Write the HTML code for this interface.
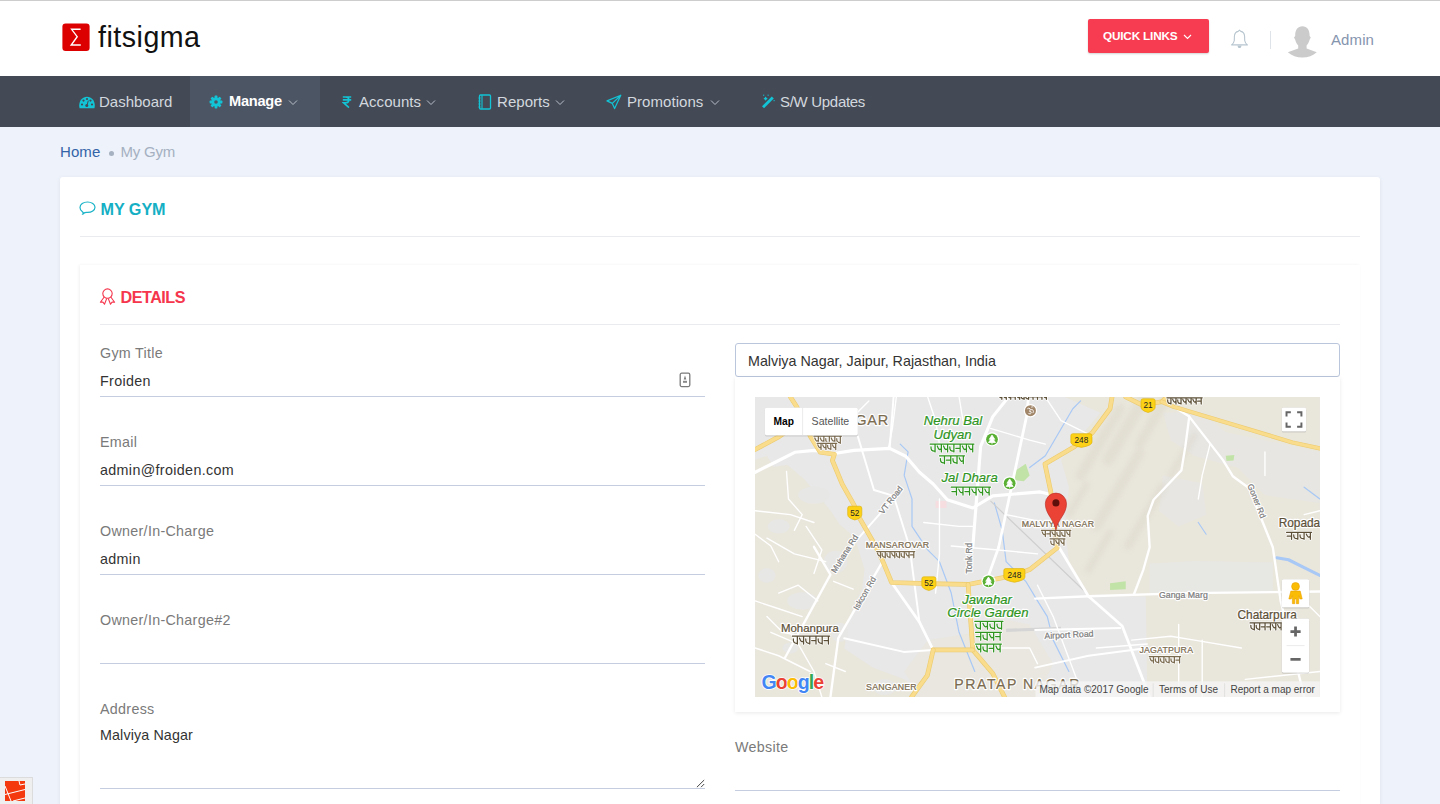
<!DOCTYPE html>
<html><head><meta charset="utf-8">
<style>
*{box-sizing:border-box;margin:0;padding:0}
html,body{width:1440px;height:804px;overflow:hidden}
body{background:#eef2fa;font-family:"Liberation Sans",sans-serif;position:relative;color:#333}
.abs{position:absolute}
svg{display:block}
#topline{left:0;top:0;width:1440px;height:1px;background:#cdcdcd}
#header{left:0;top:1px;width:1440px;height:75px;background:#fff}
#nav{left:0;top:76px;width:1440px;height:51px;background:#434a55}
#nav .active{position:absolute;left:190px;top:0;width:130px;height:51px;background:#4c5564}
.navt{position:absolute;top:0;line-height:51px;font-size:15px;color:#d3d8df;white-space:nowrap;letter-spacing:.05px}
.ico{position:absolute}
#card{left:60px;top:177px;width:1320px;height:700px;background:#fff;border-radius:3px;box-shadow:0 1px 4px rgba(0,0,0,.07)}
.hr{position:absolute;height:1px;background:#e9ebee}
#inner{left:80px;top:265px;width:1280px;height:600px;background:#fff;box-shadow:-1px 0 3px rgba(0,0,0,.06)}
.lbl{position:absolute;font-size:14.3px;line-height:18px;color:#7a7a7a;white-space:nowrap;letter-spacing:.3px}
.val{position:absolute;font-size:14.3px;line-height:18px;color:#333;white-space:nowrap;letter-spacing:.35px}
.ul{position:absolute;height:1px;background:#c5cee0}
</style></head><body>
<div class="abs" id="topline"></div>
<div class="abs" id="header"></div>
<!-- logo -->
<svg class="ico" style="left:62px;top:23px" width="28" height="28" viewBox="0 0 28 28">
  <rect x="0.4" y="0.4" width="27.2" height="27.5" rx="3.2" fill="#dd0000"/>
  <path d="M18.6 6.3H9.6L15.2 13.7L9.2 22H18.8" fill="none" stroke="#fff" stroke-width="1.4" stroke-linejoin="miter"/>
</svg>
<div class="abs" style="left:98px;top:17px;font-size:28.6px;color:#111;line-height:40px;letter-spacing:.5px">fitsigma</div>
<!-- quick links -->
<div class="abs" style="left:1088px;top:19px;width:121px;height:34px;background:#f73b51;border-radius:2px;box-shadow:0 1px 2px rgba(0,0,0,.18)"></div>
<div class="abs" style="left:1103px;top:19px;line-height:34px;font-size:11.8px;font-weight:bold;color:#fff;letter-spacing:-.2px">QUICK LINKS</div>
<svg class="ico" style="left:1183px;top:33px" width="9" height="7" viewBox="0 0 9 7"><path d="M1 2L4.5 5.5L8 2" fill="none" stroke="#fff" stroke-width="1.1"/></svg>
<!-- bell -->
<svg class="ico" style="left:1230px;top:29px" width="20" height="21" viewBox="0 0 20 21">
  <path d="M9.4 1.2L8.2 2.4C6 2.8 4.6 4.6 4.4 7.2L4.3 11.5C4.1 13 3.4 14.4 1.6 15.9H17.4C15.6 14.4 14.9 13 14.7 11.5L14.6 7.2C14.4 4.6 13 2.8 10.8 2.4Z" fill="none" stroke="#b7c5cf" stroke-width="1.1" stroke-linejoin="round"/>
  <path d="M7.4 16.4H11.6L10.9 18.6Q9.5 19.6 8.1 18.6Z" fill="#b7c5cf"/>
</svg>
<!-- divider -->
<div class="abs" style="left:1270px;top:31px;width:1px;height:18px;background:#dde3e8"></div>
<!-- avatar -->
<svg class="ico" style="left:1287px;top:26px" width="31" height="32" viewBox="0 0 31 32">
  <path d="M8.2 10C8 4 10.8 0.3 15.4 0.3C20 0.3 22.8 4 22.6 10L23.8 11.6L22.6 13.8C22 16.4 20.6 18.6 19.6 19.6V22.4L29.8 26.2C26 29.6 21 31.6 15.4 31.6C9.8 31.6 4.8 29.6 0.8 26.2L11.2 22.4V19.6C10.2 18.6 8.8 16.4 8.2 13.8L7 11.6Z" fill="#cbcbcb"/>
</svg>
<div class="abs" style="left:1331px;top:27px;font-size:15px;color:#8595ae;line-height:26px;letter-spacing:.1px">Admin</div>

<div class="abs" id="nav">
  <div class="active"></div>
  <!-- dashboard icon -->
  <svg class="ico" style="left:79px;top:20px" width="16" height="13" viewBox="0 0 16 13">
    <path d="M0.6 12.2C0.3 11.2 0.2 10.4 0.2 9.5C0.2 4.6 3.6 0.8 8 0.8C12.4 0.8 15.8 4.6 15.8 9.5C15.8 10.4 15.7 11.2 15.4 12.2Z" fill="#12c4d6"/>
    <circle cx="3" cy="8.5" r="1.1" fill="#434a55"/><circle cx="4.5" cy="4.6" r="1.1" fill="#434a55"/><circle cx="8" cy="3" r="1.1" fill="#434a55"/><circle cx="11.5" cy="4.6" r="1.1" fill="#434a55"/><circle cx="13" cy="8.5" r="1.1" fill="#434a55"/>
    <circle cx="7.8" cy="9.6" r="1.5" fill="#434a55"/><path d="M8 9.5L9.3 4.6" stroke="#434a55" stroke-width="1"/>
  </svg>
  <div class="navt" style="left:99px;top:0;letter-spacing:0">Dashboard</div>
  <!-- gear -->
  <svg class="ico" style="left:209px;top:19px" width="14" height="14" viewBox="0 0 14 14">
    <g transform="translate(7 7)" fill="#12c4d6">
      <circle r="4.6"/>
      <rect x="-1.4" y="-6.4" width="2.8" height="12.8" rx=".6"/>
      <rect x="-1.4" y="-6.4" width="2.8" height="12.8" rx=".6" transform="rotate(45)"/>
      <rect x="-1.4" y="-6.4" width="2.8" height="12.8" rx=".6" transform="rotate(90)"/>
      <rect x="-1.4" y="-6.4" width="2.8" height="12.8" rx=".6" transform="rotate(135)"/>
      <circle r="1.8" fill="#4c5564"/>
    </g>
  </svg>
  <div class="navt" style="left:229px;top:0;color:#fff;font-weight:bold;font-size:14.6px;letter-spacing:-.25px">Manage</div>
  <svg class="ico" style="left:288px;top:23px" width="10" height="7" viewBox="0 0 10 7"><path d="M1 1.5L5 5.5L9 1.5" fill="none" stroke="#b8bfc9" stroke-width="1"/></svg>
  <!-- rupee -->
  <svg class="ico" style="left:342px;top:20px" width="10" height="12" viewBox="0 0 10 12">
    <path d="M0.8 1H9.2 M0.8 3.9H9.2 M1.2 1H3.8C5.8 1 6.8 2.2 6.8 3.9C6.8 5.6 5.6 6.7 3.6 6.7H1.4L7 11.6" fill="none" stroke="#12c4d6" stroke-width="1.6"/>
  </svg>
  <div class="navt" style="left:359px;top:0">Accounts</div>
  <svg class="ico" style="left:426px;top:23px" width="10" height="7" viewBox="0 0 10 7"><path d="M1 1.5L5 5.5L9 1.5" fill="none" stroke="#b8bfc9" stroke-width="1"/></svg>
  <!-- notebook -->
  <svg class="ico" style="left:478px;top:18px" width="14" height="16" viewBox="0 0 14 16">
    <rect x="1.5" y="1" width="11" height="14" rx="1" fill="none" stroke="#12c4d6" stroke-width="1.3"/>
    <path d="M4 1.2V14.8" stroke="#12c4d6" stroke-width="1.1"/>
    <path d="M0.5 4H2.5 M0.5 7H2.5 M0.5 10H2.5 M0.5 13H2.5" stroke="#12c4d6" stroke-width="1"/>
  </svg>
  <div class="navt" style="left:497px;top:0">Reports</div>
  <svg class="ico" style="left:555px;top:23px" width="10" height="7" viewBox="0 0 10 7"><path d="M1 1.5L5 5.5L9 1.5" fill="none" stroke="#b8bfc9" stroke-width="1"/></svg>
  <!-- plane -->
  <svg class="ico" style="left:605px;top:18px" width="17" height="16" viewBox="0 0 17 16">
    <path d="M15.8 1.2L2 6.9L7.3 9.4L9.6 14.6Z M15.8 1.2L7.3 9.4" fill="none" stroke="#12c4d6" stroke-width="1.2" stroke-linejoin="round"/>
  </svg>
  <div class="navt" style="left:627px;top:0">Promotions</div>
  <svg class="ico" style="left:710px;top:23px" width="10" height="7" viewBox="0 0 10 7"><path d="M1 1.5L5 5.5L9 1.5" fill="none" stroke="#b8bfc9" stroke-width="1"/></svg>
  <!-- wand -->
  <svg class="ico" style="left:761px;top:18px" width="15" height="15" viewBox="0 0 15 15">
    <path d="M2 13.2L11.8 3.4" stroke="#12c4d6" stroke-width="2.8" stroke-linecap="butt"/>
    <path d="M4.6 2.6l.9 1.2 1.2.9-1.2.9-.9 1.2-.9-1.2-1.2-.9 1.2-.9z" fill="#12c4d6"/>
    <rect x="2.2" y="0.6" width="1" height="1.2" fill="#12c4d6"/><rect x="6.6" y="0.6" width="1" height="1.2" fill="#12c4d6"/><rect x="12.6" y="6" width="1" height="1.2" fill="#12c4d6"/>
  </svg>
  <div class="navt" style="left:780px;top:0;letter-spacing:-.3px">S/W Updates</div>
</div>
<div class="abs" style="left:60px;top:142px;font-size:15px;color:#3364a8;line-height:20px;letter-spacing:.1px">Home</div>
<div class="abs" style="left:108.7px;top:151px;width:5px;height:5px;border-radius:50%;background:#a6b1c1"></div>
<div class="abs" style="left:120.5px;top:142px;font-size:15px;color:#a4b0c1;line-height:20px;letter-spacing:-.2px">My Gym</div>

<div class="abs" id="card"></div>
<svg class="ico" style="left:79px;top:200px" width="18" height="16" viewBox="0 0 18 16">
  <path d="M4.6 13.6C4.4 12.6 4.1 12.4 3.2 11.6C1.9 10.6 1 9.2 1 7.6C1 4.4 4.4 2 8.5 2C12.6 2 16 4.4 16 7.3C16 10.2 12.6 12.4 8.6 12.4C7.6 12.4 6.8 12.3 5.9 12.6C5 13 4.4 13.8 3.4 14.2Z" fill="none" stroke="#1ab3c7" stroke-width="1.2" stroke-linejoin="round"/>
</svg>
<div class="abs" style="left:100.5px;top:199px;font-size:16.2px;font-weight:bold;color:#14afc4;line-height:20px;letter-spacing:-.05px">MY GYM</div>
<div class="hr" style="left:80px;top:236px;width:1280px"></div>
<div class="abs" id="inner"></div>
<svg class="ico" style="left:99px;top:287px" width="17" height="18" viewBox="0 0 17 18">
  <circle cx="8.5" cy="6.6" r="4.7" fill="none" stroke="#f5364d" stroke-width="1.1"/>
  <path d="M5.2 10L1.4 15.2L3.9 15.1L5.5 17.2L7.8 11.4 M11.8 10L15.6 15.2L13.1 15.1L11.5 17.2L9.2 11.4" fill="none" stroke="#f5364d" stroke-width="1.1" stroke-linejoin="round"/>
</svg>
<div class="abs" style="left:120.5px;top:287px;font-size:16.2px;font-weight:bold;color:#f5364d;line-height:20px;letter-spacing:-.5px">DETAILS</div>
<div class="hr" style="left:100px;top:324px;width:1240px"></div>

<div class="lbl" style="left:100px;top:344px">Gym Title</div>
<div class="val" style="left:100px;top:372px">Froiden</div>
<svg class="ico" style="left:679px;top:372px" width="12" height="16" viewBox="0 0 12 16">
  <rect x="1.2" y="1.2" width="9.6" height="13.4" rx="1.5" fill="none" stroke="#7a7a7a" stroke-width="1.3"/>
  <path d="M6 3.4L4.7 7.6H7.3Z" fill="#7a7a7a"/><rect x="4" y="8.8" width="4" height="2" fill="#888"/>
</svg>
<div class="ul" style="left:100px;top:396px;width:605px"></div>

<div class="lbl" style="left:100px;top:433px">Email</div>
<div class="val" style="left:100px;top:461px">admin@froiden.com</div>
<div class="ul" style="left:100px;top:485px;width:605px"></div>

<div class="lbl" style="left:100px;top:522px">Owner/In-Charge</div>
<div class="val" style="left:100px;top:550px">admin</div>
<div class="ul" style="left:100px;top:574px;width:605px"></div>

<div class="lbl" style="left:100px;top:611px">Owner/In-Charge#2</div>
<div class="ul" style="left:100px;top:663px;width:605px"></div>

<div class="lbl" style="left:100px;top:700px">Address</div>
<div class="val" style="left:100px;top:726px;letter-spacing:.12px">Malviya Nagar</div>
<svg class="ico" style="left:696px;top:779px" width="9" height="9" viewBox="0 0 9 9"><path d="M7.9 1.3L1.2 7.9 M7.9 5.3L5.3 7.9" stroke="#444" stroke-width="1" stroke-linecap="round"/></svg>
<div class="ul" style="left:100px;top:788px;width:605px"></div>

<div class="abs" style="left:735px;top:343px;width:605px;height:34px;border:1px solid #bac6dc;border-radius:3px;background:#fff"></div>
<div class="val" style="left:748px;top:352px;letter-spacing:0">Malviya Nagar, Jaipur, Rajasthan, India</div>
<div class="abs" style="left:735px;top:377px;width:605px;height:335px;background:#fff;box-shadow:0 1px 4px rgba(0,0,0,.09)"></div>
<div class="abs" id="map" style="left:755px;top:397px;width:565px;height:300px;background:#e8e8e8;overflow:hidden"><svg width="565" height="300" viewBox="0 0 1440 765" font-family="Liberation Sans, sans-serif" style="display:block">
<rect width="1440" height="765" fill="#e8e8e8"/>
<polygon points="0,192 38,180 82,173 127,211 190,287 216,325 254,357 279,439 273,490 254,528 235,579 228,642 300,690 380,720 440,765 0,765" fill="#e9e6dc"/>
<ellipse cx="150" cy="250" rx="40" ry="22" fill="#e7e7e5"/>
<ellipse cx="60" cy="330" rx="28" ry="18" fill="#e7e7e5"/>
<ellipse cx="205" cy="420" rx="30" ry="28" fill="#e7e7e5"/>
<ellipse cx="120" cy="520" rx="38" ry="22" fill="#e7e7e5"/>
<ellipse cx="215" cy="600" rx="22" ry="25" fill="#e7e7e5"/>
<ellipse cx="30" cy="455" rx="22" ry="18" fill="#e7e7e5"/>
<ellipse cx="330" cy="740" rx="30" ry="20" fill="#e7e7e5"/>
<ellipse cx="90" cy="640" rx="20" ry="14" fill="#e7e7e5"/>
<polygon points="0,160 30,150 60,200 0,230" fill="#e9e6dc"/>
<polygon points="790,0 1440,0 1440,765 1000,765 996,508 850,508 800,420 790,330 800,230 780,160 830,100 880,40" fill="#e9e6dc"/>
<polygon points="440,620 560,600 600,560 700,580 760,680 720,765 420,765 380,700" fill="#e9e7e0"/>
<polygon points="1040,40 1140,40 1200,90 1440,140 1440,270 1300,250 1230,180 1120,150 1060,110" fill="#e7e6e2"/>
<polygon points="1006,425 1120,418 1320,422 1320,496 1006,500" fill="#e7e7e4"/>
<polygon points="1040,200 1140,220 1150,300 1080,330 1030,290" fill="#e7e6e2"/>
<defs><filter id="bl" x="-20%" y="-20%" width="140%" height="140%"><feGaussianBlur stdDeviation="7"/></filter></defs>
<g filter="url(#bl)" opacity=".45">
<path d="M830 200 l100 -170" stroke="#dad6c8" stroke-width="26" stroke-linecap="round"/>
<path d="M900 160 l120 -204" stroke="#dad6c8" stroke-width="30" stroke-linecap="round"/>
<path d="M980 120 l100 -170" stroke="#dad6c8" stroke-width="24" stroke-linecap="round"/>
<path d="M870 330 l110 -187" stroke="#dad6c8" stroke-width="26" stroke-linecap="round"/>
<path d="M1010 60 l80 -136" stroke="#dad6c8" stroke-width="20" stroke-linecap="round"/>
<path d="M950 380 l90 -153" stroke="#dad6c8" stroke-width="22" stroke-linecap="round"/>
<path d="M850 440 l55 -93.5" stroke="#dad6c8" stroke-width="20" stroke-linecap="round"/>
<path d="M1060 200 l60 -102" stroke="#dad6c8" stroke-width="18" stroke-linecap="round"/>
<path d="M800 300 l45 -76.5" stroke="#dad6c8" stroke-width="18" stroke-linecap="round"/>
</g>
<polygon points="660,190 690,170 700,200 685,215 662,212" fill="#c2e3a8"/>
<polygon points="905,475 945,470 945,490 905,492" fill="#c2e3a8"/>
<polygon points="1200,150 1222,148 1220,162 1202,163" fill="#c2e3a8"/>
<rect x="460" y="265" width="28" height="18" fill="#f5dde0"/>
<polyline points="1330,410 1360,415 1400,435 1440,455" fill="none" stroke="#a8c8f5" stroke-width="8" stroke-linejoin="round" stroke-linecap="round"/>
<polyline points="610,270 630,340 640,420 690,470 720,520 745,560 760,620 800,700" fill="none" stroke="#a8c8f5" stroke-width="3" stroke-linejoin="round" stroke-linecap="round"/>
<polyline points="370,120 390,140 380,200 400,260 400,330 440,390 470,420 500,500 520,600 560,700" fill="none" stroke="#a8c8f5" stroke-width="3" stroke-linejoin="round" stroke-linecap="round"/>
<polyline points="700,180 740,150 810,30 830,10" fill="none" stroke="#a8c8f5" stroke-width="3" stroke-linejoin="round" stroke-linecap="round"/>
<polyline points="1130,320 1150,350" fill="none" stroke="#a8c8f5" stroke-width="3" stroke-linejoin="round" stroke-linecap="round"/>
<polyline points="1400,230 1440,260" fill="none" stroke="#a8c8f5" stroke-width="3" stroke-linejoin="round" stroke-linecap="round"/>
<polyline points="600,265 720,380 850,505" fill="none" stroke="#cfcfcf" stroke-width="3"/>
<polyline points="640,595 780,590" fill="none" stroke="#d5d5d5" stroke-width="8"/>
<polyline points="80,190 85,260 120,300 100,340" fill="none" stroke="#ffffff" stroke-width="3.5" stroke-linejoin="round" stroke-linecap="round"/>
<polyline points="0,350 40,380 60,420" fill="none" stroke="#ffffff" stroke-width="3.5" stroke-linejoin="round" stroke-linecap="round"/>
<polyline points="130,330 170,390 150,450" fill="none" stroke="#ffffff" stroke-width="3.5" stroke-linejoin="round" stroke-linecap="round"/>
<polyline points="60,500 110,480 160,520" fill="none" stroke="#ffffff" stroke-width="3.5" stroke-linejoin="round" stroke-linecap="round"/>
<polyline points="30,560 70,600 120,610" fill="none" stroke="#ffffff" stroke-width="3.5" stroke-linejoin="round" stroke-linecap="round"/>
<polyline points="200,470 250,490" fill="none" stroke="#ffffff" stroke-width="3.5" stroke-linejoin="round" stroke-linecap="round"/>
<polyline points="180,680 230,700" fill="none" stroke="#ffffff" stroke-width="3.5" stroke-linejoin="round" stroke-linecap="round"/>
<polyline points="0,290 90,300 150,320" fill="none" stroke="#ffffff" stroke-width="3.5" stroke-linejoin="round" stroke-linecap="round"/>
<polyline points="30,360 100,400 180,420" fill="none" stroke="#ffffff" stroke-width="3.5" stroke-linejoin="round" stroke-linecap="round"/>
<polyline points="0,520 60,540 120,560" fill="none" stroke="#ffffff" stroke-width="3.5" stroke-linejoin="round" stroke-linecap="round"/>
<polyline points="40,600 110,630 150,700 170,765" fill="none" stroke="#ffffff" stroke-width="3.5" stroke-linejoin="round" stroke-linecap="round"/>
<polyline points="260,40 290,10" fill="none" stroke="#ffffff" stroke-width="3.5" stroke-linejoin="round" stroke-linecap="round"/>
<polyline points="360,0 350,80 340,130" fill="none" stroke="#ffffff" stroke-width="3.5" stroke-linejoin="round" stroke-linecap="round"/>
<polyline points="440,0 460,60 470,120" fill="none" stroke="#ffffff" stroke-width="3.5" stroke-linejoin="round" stroke-linecap="round"/>
<polyline points="520,0 530,60" fill="none" stroke="#ffffff" stroke-width="3.5" stroke-linejoin="round" stroke-linecap="round"/>
<polyline points="740,0 780,60 860,100" fill="none" stroke="#ffffff" stroke-width="3.5" stroke-linejoin="round" stroke-linecap="round"/>
<polyline points="600,80 700,110 740,120" fill="none" stroke="#ffffff" stroke-width="3.5" stroke-linejoin="round" stroke-linecap="round"/>
<polyline points="430,320 520,330 560,330" fill="none" stroke="#ffffff" stroke-width="3.5" stroke-linejoin="round" stroke-linecap="round"/>
<polyline points="470,260 470,400 460,500" fill="none" stroke="#ffffff" stroke-width="3.5" stroke-linejoin="round" stroke-linecap="round"/>
<polyline points="500,380 620,390 720,400" fill="none" stroke="#ffffff" stroke-width="3.5" stroke-linejoin="round" stroke-linecap="round"/>
<polyline points="640,300 740,320" fill="none" stroke="#ffffff" stroke-width="3.5" stroke-linejoin="round" stroke-linecap="round"/>
<polyline points="720,480 760,560 790,640 820,720" fill="none" stroke="#ffffff" stroke-width="3.5" stroke-linejoin="round" stroke-linecap="round"/>
<polyline points="620,640 700,640 720,680" fill="none" stroke="#ffffff" stroke-width="3.5" stroke-linejoin="round" stroke-linecap="round"/>
<polyline points="1160,120 1140,200 1130,260" fill="none" stroke="#ffffff" stroke-width="3.5" stroke-linejoin="round" stroke-linecap="round"/>
<polyline points="1300,140 1300,200" fill="none" stroke="#ffffff" stroke-width="3.5" stroke-linejoin="round" stroke-linecap="round"/>
<polyline points="1400,300 1440,290" fill="none" stroke="#ffffff" stroke-width="3.5" stroke-linejoin="round" stroke-linecap="round"/>
<polyline points="960,620 1060,610 1120,620 1240,640" fill="none" stroke="#ffffff" stroke-width="3.5" stroke-linejoin="round" stroke-linecap="round"/>
<polyline points="1080,580 1080,765" fill="none" stroke="#ffffff" stroke-width="3.5" stroke-linejoin="round" stroke-linecap="round"/>
<polyline points="1140,620 1140,765" fill="none" stroke="#ffffff" stroke-width="3.5" stroke-linejoin="round" stroke-linecap="round"/>
<polyline points="870,640 1000,630" fill="none" stroke="#ffffff" stroke-width="3.5" stroke-linejoin="round" stroke-linecap="round"/>
<polyline points="1250,720 1440,700" fill="none" stroke="#ffffff" stroke-width="3.5" stroke-linejoin="round" stroke-linecap="round"/>
<polyline points="1400,520 1440,560" fill="none" stroke="#ffffff" stroke-width="3.5" stroke-linejoin="round" stroke-linecap="round"/>
<polyline points="0,192 50,167 101,141 151,136 202,144 252,136 343,131 384,151 419,192 454,222 490,262 555,283 606,252 727,242 760,250" fill="none" stroke="#ffffff" stroke-width="8" stroke-linejoin="round" stroke-linecap="round"/>
<polyline points="555,383 575,126 606,50 646,0" fill="none" stroke="#ffffff" stroke-width="8" stroke-linejoin="round" stroke-linecap="round"/>
<polyline points="621,383 692,50 697,0" fill="none" stroke="#ffffff" stroke-width="7" stroke-linejoin="round" stroke-linecap="round"/>
<polyline points="596,453 621,383" fill="none" stroke="#ffffff" stroke-width="7" stroke-linejoin="round" stroke-linecap="round"/>
<polyline points="774,382 850,508 936,584 1006,765" fill="none" stroke="#ffffff" stroke-width="7" stroke-linejoin="round" stroke-linecap="round"/>
<polyline points="1107,50 1097,126 1087,187 1016,262 1001,303 1006,383 990,440 966,503" fill="none" stroke="#ffffff" stroke-width="6" stroke-linejoin="round" stroke-linecap="round"/>
<polyline points="1067,25 1107,50 1193,161 1218,202 1259,232 1320,383 1340,520 1370,640 1400,765" fill="none" stroke="#ffffff" stroke-width="6" stroke-linejoin="round" stroke-linecap="round"/>
<polyline points="714,514 850,508 1100,500 1440,496" fill="none" stroke="#ffffff" stroke-width="6" stroke-linejoin="round" stroke-linecap="round"/>
<polyline points="714,594 931,589" fill="none" stroke="#ffffff" stroke-width="5" stroke-linejoin="round" stroke-linecap="round"/>
<polyline points="150,382 192,453 126,574 76,665" fill="none" stroke="#ffffff" stroke-width="6" stroke-linejoin="round" stroke-linecap="round"/>
<polyline points="323,423 212,615 192,765" fill="none" stroke="#ffffff" stroke-width="6" stroke-linejoin="round" stroke-linecap="round"/>
<polyline points="227,615 379,650 454,645" fill="none" stroke="#ffffff" stroke-width="5" stroke-linejoin="round" stroke-linecap="round"/>
<polyline points="348,473 419,574 454,645" fill="none" stroke="#ffffff" stroke-width="7" stroke-linejoin="round" stroke-linecap="round"/>
<polyline points="262,101 303,237 353,252 394,383 419,574" fill="none" stroke="#ffffff" stroke-width="5" stroke-linejoin="round" stroke-linecap="round"/>
<polyline points="242,384 363,247" fill="none" stroke="#ffffff" stroke-width="5" stroke-linejoin="round" stroke-linecap="round"/>
<polyline points="353,0 343,131" fill="none" stroke="#ffffff" stroke-width="5" stroke-linejoin="round" stroke-linecap="round"/>
<polyline points="0,640 60,660 140,700" fill="none" stroke="#ffffff" stroke-width="4" stroke-linejoin="round" stroke-linecap="round"/>
<polyline points="714,690 850,660 1000,640" fill="none" stroke="#ffffff" stroke-width="5" stroke-linejoin="round" stroke-linecap="round"/>
<polyline points="90,0 106,25 141,101 166,141 202,146 197,162 222,222 252,275 263,303 303,373 323,413 348,473 443,476 543,478 661,455 700,440 770,385 760,300 754,242 739,171 815,126 860,91 905,30 910,0" fill="none" stroke="#eccb6e" stroke-width="12" stroke-linejoin="round" stroke-linecap="round"/>
<polyline points="90,0 106,25 141,101 166,141 202,146 197,162 222,222 252,275 263,303 303,373 323,413 348,473 443,476 543,478 661,455 700,440 770,385 760,300 754,242 739,171 815,126 860,91 905,30 910,0" fill="none" stroke="#f9dc8c" stroke-width="9" stroke-linejoin="round" stroke-linecap="round"/>
<polyline points="0,134 61,101 120,60" fill="none" stroke="#eccb6e" stroke-width="12" stroke-linejoin="round" stroke-linecap="round"/>
<polyline points="0,134 61,101 120,60" fill="none" stroke="#f9dc8c" stroke-width="9" stroke-linejoin="round" stroke-linecap="round"/>
<polyline points="543,478 555,645 606,705 636,765" fill="none" stroke="#eccb6e" stroke-width="12" stroke-linejoin="round" stroke-linecap="round"/>
<polyline points="543,478 555,645 606,705 636,765" fill="none" stroke="#f9dc8c" stroke-width="9" stroke-linejoin="round" stroke-linecap="round"/>
<polyline points="454,645 555,645" fill="none" stroke="#eccb6e" stroke-width="12" stroke-linejoin="round" stroke-linecap="round"/>
<polyline points="454,645 555,645" fill="none" stroke="#f9dc8c" stroke-width="9" stroke-linejoin="round" stroke-linecap="round"/>
<polyline points="454,645 439,710 399,765" fill="none" stroke="#eccb6e" stroke-width="12" stroke-linejoin="round" stroke-linecap="round"/>
<polyline points="454,645 439,710 399,765" fill="none" stroke="#f9dc8c" stroke-width="9" stroke-linejoin="round" stroke-linecap="round"/>
<polyline points="945,0 986,20 1037,12 1050,0" fill="none" stroke="#eccb6e" stroke-width="12" stroke-linejoin="round" stroke-linecap="round"/>
<polyline points="945,0 986,20 1037,12 1050,0" fill="none" stroke="#f9dc8c" stroke-width="9" stroke-linejoin="round" stroke-linecap="round"/>
<polyline points="1037,12 1067,25 1218,70 1370,116 1440,131" fill="none" stroke="#eccb6e" stroke-width="11" stroke-linejoin="round" stroke-linecap="round"/>
<polyline points="1037,12 1067,25 1218,70 1370,116 1440,131" fill="none" stroke="#f9dc8c" stroke-width="8" stroke-linejoin="round" stroke-linecap="round"/>
<path d="M989 4.5 H1015 Q1020 4.5 1020 9.5 V26.2 Q1020 34.6 1002 39.5 Q984 34.6 984 26.2 V9.5 Q984 4.5 989 4.5Z" fill="#fcd116" stroke="#dcb10c" stroke-width="1.6"/>
<text x="1002" y="29" font-size="21" fill="#222" font-weight="normal" font-style="normal" text-anchor="middle" letter-spacing="0">21</text>
<path d="M810 93.5 H854 Q859 93.5 859 98.5 V115.2 Q859 123.6 832 128.5 Q805 123.6 805 115.2 V98.5 Q805 93.5 810 93.5Z" fill="#fcd116" stroke="#dcb10c" stroke-width="1.6"/>
<text x="832" y="118" font-size="21" fill="#222" font-weight="normal" font-style="normal" text-anchor="middle" letter-spacing="0">248</text>
<path d="M241 278.5 H267 Q272 278.5 272 283.5 V300.2 Q272 308.6 254 313.5 Q236 308.6 236 300.2 V283.5 Q236 278.5 241 278.5Z" fill="#fcd116" stroke="#dcb10c" stroke-width="1.6"/>
<text x="254" y="303" font-size="21" fill="#222" font-weight="normal" font-style="normal" text-anchor="middle" letter-spacing="0">52</text>
<path d="M430 458.5 H456 Q461 458.5 461 463.5 V480.2 Q461 488.6 443 493.5 Q425 488.6 425 480.2 V463.5 Q425 458.5 430 458.5Z" fill="#fcd116" stroke="#dcb10c" stroke-width="1.6"/>
<text x="443" y="483" font-size="21" fill="#222" font-weight="normal" font-style="normal" text-anchor="middle" letter-spacing="0">52</text>
<path d="M639 437.5 H683 Q688 437.5 688 442.5 V459.2 Q688 467.6 661 472.5 Q634 467.6 634 459.2 V442.5 Q634 437.5 639 437.5Z" fill="#fcd116" stroke="#dcb10c" stroke-width="1.6"/>
<text x="661" y="462" font-size="21" fill="#222" font-weight="normal" font-style="normal" text-anchor="middle" letter-spacing="0">248</text>
<circle cx="604" cy="108" r="18" fill="#fff"/>
<circle cx="604" cy="108" r="15" fill="#5ab034"/>
<path d="M604 97 l-7 11h4l-6 8h18l-6-8h4z M604 116 v5" fill="#fff" stroke="#fff" stroke-width="2"/>
<circle cx="649" cy="220" r="18" fill="#fff"/>
<circle cx="649" cy="220" r="15" fill="#5ab034"/>
<path d="M649 209 l-7 11h4l-6 8h18l-6-8h4z M649 228 v5" fill="#fff" stroke="#fff" stroke-width="2"/>
<circle cx="595" cy="470" r="18" fill="#fff"/>
<circle cx="595" cy="470" r="15" fill="#5ab034"/>
<path d="M595 459 l-7 11h4l-6 8h18l-6-8h4z M595 478 v5" fill="#fff" stroke="#fff" stroke-width="2"/>
<circle cx="702" cy="35" r="17" fill="#fff"/><circle cx="702" cy="35" r="14" fill="#a1866a"/><path d="M694 30q4-3 7 0q3 4-2 6q6 0 5 5q-2 4-7 1 M703 33q3-3 6 1q2 4-1 7 M704 26q3-2 5 0" fill="none" stroke="#fff" stroke-width="2.2"/>
<text x="255" y="72" font-size="36.96" fill="#fff" stroke="#fff" stroke-width="6" stroke-linejoin="round" font-weight="normal" font-style="normal" text-anchor="start" letter-spacing="2">GAR</text>
<text x="255" y="72" font-size="36.96" fill="#7b6b4f" stroke="#7b6b4f" stroke-width="0.6" font-weight="normal" font-style="normal" text-anchor="start" letter-spacing="2">GAR</text>
<path d="M150 100H220 M161.2 100V118 M152.1 104.5q4.2 12.6 9.1 5.4 M175.2 100V118 M166.1 104.5q4.2 12.6 9.1 5.4 M189.2 100V118 M180.1 106.3q-0.7 10.8 8.4 9.9 M203.2 100V118 M194.1 104.5q4.2 12.6 9.1 5.4 M217.2 100V118 M208.1 106.3q-0.7 10.8 8.4 9.9" fill="none" stroke="#fff" stroke-width="7.2" stroke-linecap="round" opacity=".9"/>
<path d="M150 100H220 M161.2 100V118 M152.1 104.5q4.2 12.6 9.1 5.4 M175.2 100V118 M166.1 104.5q4.2 12.6 9.1 5.4 M189.2 100V118 M180.1 106.3q-0.7 10.8 8.4 9.9 M203.2 100V118 M194.1 104.5q4.2 12.6 9.1 5.4 M217.2 100V118 M208.1 106.3q-0.7 10.8 8.4 9.9" fill="none" stroke="#7b6b4f" stroke-width="3.2" stroke-linecap="round"/>
<path d="M158 118H208 M168 118V134 M159.875 122q3.75 11.2 8.125 4.8 M180.5 118V134 M172.375 122q3.75 11.2 8.125 4.8 M193 118V134 M184.875 123.6q-0.625 9.6 7.5 8.8 M205.5 118V134 M197.375 122q3.75 11.2 8.125 4.8" fill="none" stroke="#fff" stroke-width="7.2" stroke-linecap="round" opacity=".9"/>
<path d="M158 118H208 M168 118V134 M159.875 122q3.75 11.2 8.125 4.8 M180.5 118V134 M172.375 122q3.75 11.2 8.125 4.8 M193 118V134 M184.875 123.6q-0.625 9.6 7.5 8.8 M205.5 118V134 M197.375 122q3.75 11.2 8.125 4.8" fill="none" stroke="#7b6b4f" stroke-width="3.2" stroke-linecap="round"/>
<text x="430" y="72" font-size="33.6" fill="#fff" stroke="#fff" stroke-width="6" stroke-linejoin="round" font-weight="normal" font-style="italic" text-anchor="start" letter-spacing="0">Nehru Bal</text>
<text x="430" y="72" font-size="33.6" fill="#2f951f" stroke="#2f951f" stroke-width="0.6" font-weight="normal" font-style="italic" text-anchor="start" letter-spacing="0">Nehru Bal</text>
<text x="455" y="107" font-size="33.6" fill="#fff" stroke="#fff" stroke-width="6" stroke-linejoin="round" font-weight="normal" font-style="italic" text-anchor="start" letter-spacing="0">Udyan</text>
<text x="455" y="107" font-size="33.6" fill="#2f951f" stroke="#2f951f" stroke-width="0.6" font-weight="normal" font-style="italic" text-anchor="start" letter-spacing="0">Udyan</text>
<path d="M446 120H558 M458.8 120V140 M448.4 127q-0.8 12 9.6 11 M474.8 120V140 M464.4 125q4.8 14 10.4 6 M490.8 120V140 M480.4 125q4.8 14 10.4 6 M506.8 120V140 M496.4 127q-0.8 12 9.6 11 M522.8 120V140 M511.6 131h11.2 M538.8 120V140 M528.4 125q4.8 14 10.4 6 M554.8 120V140 M544.4 125q4.8 14 10.4 6" fill="none" stroke="#fff" stroke-width="7.2" stroke-linecap="round" opacity=".9"/>
<path d="M446 120H558 M458.8 120V140 M448.4 127q-0.8 12 9.6 11 M474.8 120V140 M464.4 125q4.8 14 10.4 6 M490.8 120V140 M480.4 125q4.8 14 10.4 6 M506.8 120V140 M496.4 127q-0.8 12 9.6 11 M522.8 120V140 M511.6 131h11.2 M538.8 120V140 M528.4 125q4.8 14 10.4 6 M554.8 120V140 M544.4 125q4.8 14 10.4 6" fill="none" stroke="#2f951f" stroke-width="3.2" stroke-linecap="round"/>
<path d="M470 150H534 M482.8 150V170 M472.4 157q-0.8 12 9.6 11 M498.8 150V170 M487.6 161h11.2 M514.8 150V170 M504.4 157q-0.8 12 9.6 11 M530.8 150V170 M520.4 155q4.8 14 10.4 6" fill="none" stroke="#fff" stroke-width="7.2" stroke-linecap="round" opacity=".9"/>
<path d="M470 150H534 M482.8 150V170 M472.4 157q-0.8 12 9.6 11 M498.8 150V170 M487.6 161h11.2 M514.8 150V170 M504.4 157q-0.8 12 9.6 11 M530.8 150V170 M520.4 155q4.8 14 10.4 6" fill="none" stroke="#2f951f" stroke-width="3.2" stroke-linecap="round"/>
<text x="475" y="217" font-size="33.6" fill="#fff" stroke="#fff" stroke-width="6" stroke-linejoin="round" font-weight="normal" font-style="italic" text-anchor="start" letter-spacing="0">Jal Dhara</text>
<text x="475" y="217" font-size="33.6" fill="#2f951f" stroke="#2f951f" stroke-width="0.6" font-weight="normal" font-style="italic" text-anchor="start" letter-spacing="0">Jal Dhara</text>
<path d="M500 230H600 M513.333 230V250 M501.667 241h11.6667 M530 230V250 M519.167 235q5 14 10.8333 6 M546.667 230V250 M535 241h11.6667 M563.333 230V250 M552.5 235q5 14 10.8333 6 M580 230V250 M569.167 235q5 14 10.8333 6 M596.667 230V250 M585.833 235q5 14 10.8333 6" fill="none" stroke="#fff" stroke-width="7.2" stroke-linecap="round" opacity=".9"/>
<path d="M500 230H600 M513.333 230V250 M501.667 241h11.6667 M530 230V250 M519.167 235q5 14 10.8333 6 M546.667 230V250 M535 241h11.6667 M563.333 230V250 M552.5 235q5 14 10.8333 6 M580 230V250 M569.167 235q5 14 10.8333 6 M596.667 230V250 M585.833 235q5 14 10.8333 6" fill="none" stroke="#2f951f" stroke-width="3.2" stroke-linecap="round"/>
<text x="680" y="331" font-size="22.4" fill="#fff" stroke="#fff" stroke-width="6" stroke-linejoin="round" font-weight="normal" font-style="normal" text-anchor="start" letter-spacing="0.5">MALVIYA NAGAR</text>
<text x="680" y="331" font-size="22.4" fill="#7b6b4f" stroke="#7b6b4f" stroke-width="0.6" font-weight="normal" font-style="normal" text-anchor="start" letter-spacing="0.5">MALVIYA NAGAR</text>
<path d="M730 340H805 M740 340V356 M731.875 344q3.75 11.2 8.125 4.8 M752.5 340V356 M743.75 348.8h8.75 M765 340V356 M756.875 344q3.75 11.2 8.125 4.8 M777.5 340V356 M769.375 345.6q-0.625 9.6 7.5 8.8 M790 340V356 M781.875 345.6q-0.625 9.6 7.5 8.8 M802.5 340V356 M794.375 344q3.75 11.2 8.125 4.8" fill="none" stroke="#fff" stroke-width="7.2" stroke-linecap="round" opacity=".9"/>
<path d="M730 340H805 M740 340V356 M731.875 344q3.75 11.2 8.125 4.8 M752.5 340V356 M743.75 348.8h8.75 M765 340V356 M756.875 344q3.75 11.2 8.125 4.8 M777.5 340V356 M769.375 345.6q-0.625 9.6 7.5 8.8 M790 340V356 M781.875 345.6q-0.625 9.6 7.5 8.8 M802.5 340V356 M794.375 344q3.75 11.2 8.125 4.8" fill="none" stroke="#7b6b4f" stroke-width="3.2" stroke-linecap="round"/>
<path d="M752 362H790 M762.133 362V378 M753.9 367.6q-0.633333 9.6 7.6 8.8 M774.8 362V378 M766.567 366q3.8 11.2 8.23333 4.8 M787.467 362V378 M779.233 366q3.8 11.2 8.23333 4.8" fill="none" stroke="#fff" stroke-width="7.2" stroke-linecap="round" opacity=".9"/>
<path d="M752 362H790 M762.133 362V378 M753.9 367.6q-0.633333 9.6 7.6 8.8 M774.8 362V378 M766.567 366q3.8 11.2 8.23333 4.8 M787.467 362V378 M779.233 366q3.8 11.2 8.23333 4.8" fill="none" stroke="#7b6b4f" stroke-width="3.2" stroke-linecap="round"/>
<text x="282" y="386" font-size="22.4" fill="#fff" stroke="#fff" stroke-width="6" stroke-linejoin="round" font-weight="normal" font-style="normal" text-anchor="start" letter-spacing="0.5">MANSAROVAR</text>
<text x="282" y="386" font-size="22.4" fill="#7b6b4f" stroke="#7b6b4f" stroke-width="0.6" font-weight="normal" font-style="normal" text-anchor="start" letter-spacing="0.5">MANSAROVAR</text>
<path d="M310 394H407 M319.7 394V410 M311.819 398q3.6375 11.2 7.88125 4.8 M331.825 394V410 M323.944 399.6q-0.60625 9.6 7.275 8.8 M343.95 394V410 M336.069 399.6q-0.60625 9.6 7.275 8.8 M356.075 394V410 M348.194 398q3.6375 11.2 7.88125 4.8 M368.2 394V410 M360.319 399.6q-0.60625 9.6 7.275 8.8 M380.325 394V410 M372.444 399.6q-0.60625 9.6 7.275 8.8 M392.45 394V410 M384.569 398q3.6375 11.2 7.88125 4.8 M404.575 394V410 M396.087 402.8h8.4875" fill="none" stroke="#fff" stroke-width="7.2" stroke-linecap="round" opacity=".9"/>
<path d="M310 394H407 M319.7 394V410 M311.819 398q3.6375 11.2 7.88125 4.8 M331.825 394V410 M323.944 399.6q-0.60625 9.6 7.275 8.8 M343.95 394V410 M336.069 399.6q-0.60625 9.6 7.275 8.8 M356.075 394V410 M348.194 398q3.6375 11.2 7.88125 4.8 M368.2 394V410 M360.319 399.6q-0.60625 9.6 7.275 8.8 M380.325 394V410 M372.444 399.6q-0.60625 9.6 7.275 8.8 M392.45 394V410 M384.569 398q3.6375 11.2 7.88125 4.8 M404.575 394V410 M396.087 402.8h8.4875" fill="none" stroke="#7b6b4f" stroke-width="3.2" stroke-linecap="round"/>
<text x="326" y="300" font-size="21.28" fill="#fff" stroke="#fff" stroke-width="6" stroke-linejoin="round" font-weight="normal" font-style="normal" text-anchor="start" letter-spacing="0" transform="rotate(-52 326 300)">VT Road</text>
<text x="326" y="300" font-size="21.28" fill="#7d7d7d" stroke="#7d7d7d" stroke-width="0.6" font-weight="normal" font-style="normal" text-anchor="start" letter-spacing="0" transform="rotate(-52 326 300)">VT Road</text>
<text x="205" y="450" font-size="21.28" fill="#fff" stroke="#fff" stroke-width="6" stroke-linejoin="round" font-weight="normal" font-style="normal" text-anchor="start" letter-spacing="0" transform="rotate(-58 205 450)">Muhana Rd</text>
<text x="205" y="450" font-size="21.28" fill="#7d7d7d" stroke="#7d7d7d" stroke-width="0.6" font-weight="normal" font-style="normal" text-anchor="start" letter-spacing="0" transform="rotate(-58 205 450)">Muhana Rd</text>
<text x="552" y="450" font-size="21.28" fill="#fff" stroke="#fff" stroke-width="6" stroke-linejoin="round" font-weight="normal" font-style="normal" text-anchor="start" letter-spacing="0" transform="rotate(-90 552 450)">Tonk Rd</text>
<text x="552" y="450" font-size="21.28" fill="#7d7d7d" stroke="#7d7d7d" stroke-width="0.6" font-weight="normal" font-style="normal" text-anchor="start" letter-spacing="0" transform="rotate(-90 552 450)">Tonk Rd</text>
<text x="262" y="545" font-size="21.28" fill="#fff" stroke="#fff" stroke-width="6" stroke-linejoin="round" font-weight="normal" font-style="normal" text-anchor="start" letter-spacing="0" transform="rotate(-60 262 545)">Iskcon Rd</text>
<text x="262" y="545" font-size="21.28" fill="#7d7d7d" stroke="#7d7d7d" stroke-width="0.6" font-weight="normal" font-style="normal" text-anchor="start" letter-spacing="0" transform="rotate(-60 262 545)">Iskcon Rd</text>
<text x="528" y="527" font-size="33.6" fill="#fff" stroke="#fff" stroke-width="6" stroke-linejoin="round" font-weight="normal" font-style="italic" text-anchor="start" letter-spacing="0">Jawahar</text>
<text x="528" y="527" font-size="33.6" fill="#2f951f" stroke="#2f951f" stroke-width="0.6" font-weight="normal" font-style="italic" text-anchor="start" letter-spacing="0">Jawahar</text>
<text x="490" y="562" font-size="33.6" fill="#fff" stroke="#fff" stroke-width="6" stroke-linejoin="round" font-weight="normal" font-style="italic" text-anchor="start" letter-spacing="0">Circle Garden</text>
<text x="490" y="562" font-size="33.6" fill="#2f951f" stroke="#2f951f" stroke-width="0.6" font-weight="normal" font-style="italic" text-anchor="start" letter-spacing="0">Circle Garden</text>
<path d="M560 572H632 M574.4 572V592 M562.7 579q-0.9 12 10.8 11 M592.4 572V592 M580.7 577q5.4 14 11.7 6 M610.4 572V592 M598.7 579q-0.9 12 10.8 11 M628.4 572V592 M616.7 579q-0.9 12 10.8 11" fill="none" stroke="#fff" stroke-width="7.2" stroke-linecap="round" opacity=".9"/>
<path d="M560 572H632 M574.4 572V592 M562.7 579q-0.9 12 10.8 11 M592.4 572V592 M580.7 577q5.4 14 11.7 6 M610.4 572V592 M598.7 579q-0.9 12 10.8 11 M628.4 572V592 M616.7 579q-0.9 12 10.8 11" fill="none" stroke="#2f951f" stroke-width="3.2" stroke-linecap="round"/>
<path d="M562 600H628 M575.2 600V620 M563.65 611h11.55 M591.7 600V620 M580.975 607q-0.825 12 9.9 11 M608.2 600V620 M597.475 605q4.95 14 10.725 6 M624.7 600V620 M613.15 611h11.55" fill="none" stroke="#fff" stroke-width="7.2" stroke-linecap="round" opacity=".9"/>
<path d="M562 600H628 M575.2 600V620 M563.65 611h11.55 M591.7 600V620 M580.975 607q-0.825 12 9.9 11 M608.2 600V620 M597.475 605q4.95 14 10.725 6 M624.7 600V620 M613.15 611h11.55" fill="none" stroke="#2f951f" stroke-width="3.2" stroke-linecap="round"/>
<path d="M562 630H628 M575.2 630V650 M564.475 635q4.95 14 10.725 6 M591.7 630V650 M580.975 637q-0.825 12 9.9 11 M608.2 630V650 M596.65 641h11.55 M624.7 630V650 M613.975 635q4.95 14 10.725 6" fill="none" stroke="#fff" stroke-width="7.2" stroke-linecap="round" opacity=".9"/>
<path d="M562 630H628 M575.2 630V650 M564.475 635q4.95 14 10.725 6 M591.7 630V650 M580.975 637q-0.825 12 9.9 11 M608.2 630V650 M596.65 641h11.55 M624.7 630V650 M613.975 635q4.95 14 10.725 6" fill="none" stroke="#2f951f" stroke-width="3.2" stroke-linecap="round"/>
<text x="738" y="617" font-size="22.4" fill="#fff" stroke="#fff" stroke-width="6" stroke-linejoin="round" font-weight="normal" font-style="normal" text-anchor="start" letter-spacing="0" transform="rotate(-3 738 617)">Airport Road</text>
<text x="738" y="617" font-size="22.4" fill="#7d7d7d" stroke="#7d7d7d" stroke-width="0.6" font-weight="normal" font-style="normal" text-anchor="start" letter-spacing="0" transform="rotate(-3 738 617)">Airport Road</text>
<text x="1030" y="513" font-size="22.4" fill="#fff" stroke="#fff" stroke-width="6" stroke-linejoin="round" font-weight="normal" font-style="normal" text-anchor="start" letter-spacing="0">Ganga Marg</text>
<text x="1030" y="513" font-size="22.4" fill="#7d7d7d" stroke="#7d7d7d" stroke-width="0.6" font-weight="normal" font-style="normal" text-anchor="start" letter-spacing="0">Ganga Marg</text>
<text x="66" y="600" font-size="29.12" fill="#fff" stroke="#fff" stroke-width="6" stroke-linejoin="round" font-weight="normal" font-style="normal" text-anchor="start" letter-spacing="0">Mohanpura</text>
<text x="66" y="600" font-size="29.12" fill="#5d5038" stroke="#5d5038" stroke-width="0.6" font-weight="normal" font-style="normal" text-anchor="start" letter-spacing="0">Mohanpura</text>
<path d="M95 610H190 M107.667 610V630 M97.375 617q-0.791667 12 9.5 11 M123.5 610V630 M113.208 615q4.75 14 10.2917 6 M139.333 610V630 M129.042 617q-0.791667 12 9.5 11 M155.167 610V630 M144.083 621h11.0833 M171 610V630 M160.708 617q-0.791667 12 9.5 11 M186.833 610V630 M175.75 621h11.0833" fill="none" stroke="#fff" stroke-width="7.2" stroke-linecap="round" opacity=".9"/>
<path d="M95 610H190 M107.667 610V630 M97.375 617q-0.791667 12 9.5 11 M123.5 610V630 M113.208 615q4.75 14 10.2917 6 M139.333 610V630 M129.042 617q-0.791667 12 9.5 11 M155.167 610V630 M144.083 621h11.0833 M171 610V630 M160.708 617q-0.791667 12 9.5 11 M186.833 610V630 M175.75 621h11.0833" fill="none" stroke="#5d5038" stroke-width="3.2" stroke-linecap="round"/>
<text x="283" y="748" font-size="22.4" fill="#fff" stroke="#fff" stroke-width="6" stroke-linejoin="round" font-weight="normal" font-style="normal" text-anchor="start" letter-spacing="0.5">SANGANER</text>
<text x="283" y="748" font-size="22.4" fill="#7b6b4f" stroke="#7b6b4f" stroke-width="0.6" font-weight="normal" font-style="normal" text-anchor="start" letter-spacing="0.5">SANGANER</text>
<text x="508" y="745" font-size="35.84" fill="#fff" stroke="#fff" stroke-width="6" stroke-linejoin="round" font-weight="normal" font-style="normal" text-anchor="start" letter-spacing="4">PRATAP NAGAR</text>
<text x="508" y="745" font-size="35.84" fill="#7b6b4f" stroke="#7b6b4f" stroke-width="0.6" font-weight="normal" font-style="normal" text-anchor="start" letter-spacing="4">PRATAP NAGAR</text>
<text x="980" y="652" font-size="22.4" fill="#fff" stroke="#fff" stroke-width="6" stroke-linejoin="round" font-weight="normal" font-style="normal" text-anchor="start" letter-spacing="0.5">JAGATPURA</text>
<text x="980" y="652" font-size="22.4" fill="#7b6b4f" stroke="#7b6b4f" stroke-width="0.6" font-weight="normal" font-style="normal" text-anchor="start" letter-spacing="0.5">JAGATPURA</text>
<path d="M1005 662H1085 M1015.67 662V678 M1007 666q4 11.2 8.66667 4.8 M1029 662V678 M1020.33 667.6q-0.666667 9.6 8 8.8 M1042.33 662V678 M1033.67 667.6q-0.666667 9.6 8 8.8 M1055.67 662V678 M1047 667.6q-0.666667 9.6 8 8.8 M1069 662V678 M1060.33 667.6q-0.666667 9.6 8 8.8 M1082.33 662V678 M1073 670.8h9.33333" fill="none" stroke="#fff" stroke-width="7.2" stroke-linecap="round" opacity=".9"/>
<path d="M1005 662H1085 M1015.67 662V678 M1007 666q4 11.2 8.66667 4.8 M1029 662V678 M1020.33 667.6q-0.666667 9.6 8 8.8 M1042.33 662V678 M1033.67 667.6q-0.666667 9.6 8 8.8 M1055.67 662V678 M1047 667.6q-0.666667 9.6 8 8.8 M1069 662V678 M1060.33 667.6q-0.666667 9.6 8 8.8 M1082.33 662V678 M1073 670.8h9.33333" fill="none" stroke="#7b6b4f" stroke-width="3.2" stroke-linecap="round"/>
<text x="1335" y="332" font-size="30.24" fill="#fff" stroke="#fff" stroke-width="6" stroke-linejoin="round" font-weight="normal" font-style="normal" text-anchor="start" letter-spacing="0">Ropada</text>
<text x="1335" y="332" font-size="30.24" fill="#5d5038" stroke="#5d5038" stroke-width="0.6" font-weight="normal" font-style="normal" text-anchor="start" letter-spacing="0">Ropada</text>
<path d="M1355 345H1419 M1367.8 345V363 M1356.6 354.9h11.2 M1383.8 345V363 M1373.4 351.3q-0.8 10.8 9.6 9.9 M1399.8 345V363 M1389.4 351.3q-0.8 10.8 9.6 9.9 M1415.8 345V363 M1405.4 349.5q4.8 12.6 10.4 5.4" fill="none" stroke="#fff" stroke-width="7.2" stroke-linecap="round" opacity=".9"/>
<path d="M1355 345H1419 M1367.8 345V363 M1356.6 354.9h11.2 M1383.8 345V363 M1373.4 351.3q-0.8 10.8 9.6 9.9 M1399.8 345V363 M1389.4 351.3q-0.8 10.8 9.6 9.9 M1415.8 345V363 M1405.4 349.5q4.8 12.6 10.4 5.4" fill="none" stroke="#5d5038" stroke-width="3.2" stroke-linecap="round"/>
<text x="1230" y="567" font-size="30.24" fill="#fff" stroke="#fff" stroke-width="6" stroke-linejoin="round" font-weight="normal" font-style="normal" text-anchor="start" letter-spacing="0">Chatarpura</text>
<text x="1230" y="567" font-size="30.24" fill="#5d5038" stroke="#5d5038" stroke-width="0.6" font-weight="normal" font-style="normal" text-anchor="start" letter-spacing="0">Chatarpura</text>
<path d="M1262 576H1344 M1272.93 576V594 M1264.05 582.3q-0.683333 10.8 8.2 9.9 M1286.6 576V594 M1277.72 582.3q-0.683333 10.8 8.2 9.9 M1300.27 576V594 M1290.7 585.9h9.56667 M1313.93 576V594 M1304.37 585.9h9.56667 M1327.6 576V594 M1318.72 580.5q4.1 12.6 8.88333 5.4 M1341.27 576V594 M1332.38 580.5q4.1 12.6 8.88333 5.4" fill="none" stroke="#fff" stroke-width="7.2" stroke-linecap="round" opacity=".9"/>
<path d="M1262 576H1344 M1272.93 576V594 M1264.05 582.3q-0.683333 10.8 8.2 9.9 M1286.6 576V594 M1277.72 582.3q-0.683333 10.8 8.2 9.9 M1300.27 576V594 M1290.7 585.9h9.56667 M1313.93 576V594 M1304.37 585.9h9.56667 M1327.6 576V594 M1318.72 580.5q4.1 12.6 8.88333 5.4 M1341.27 576V594 M1332.38 580.5q4.1 12.6 8.88333 5.4" fill="none" stroke="#5d5038" stroke-width="3.2" stroke-linecap="round"/>
<text x="1255" y="225" font-size="21.28" fill="#fff" stroke="#fff" stroke-width="6" stroke-linejoin="round" font-weight="normal" font-style="normal" text-anchor="start" letter-spacing="0" transform="rotate(68 1255 225)">Goner Rd</text>
<text x="1255" y="225" font-size="21.28" fill="#7d7d7d" stroke="#7d7d7d" stroke-width="0.6" font-weight="normal" font-style="normal" text-anchor="start" letter-spacing="0" transform="rotate(68 1255 225)">Goner Rd</text>
<path d="M1050 2H1140 M1060.29 2V18 M1051.93 7.6q-0.642857 9.6 7.71429 8.8 M1073.14 2V18 M1064.79 6q3.85714 11.2 8.35714 4.8 M1086 2V18 M1077.64 7.6q-0.642857 9.6 7.71429 8.8 M1098.86 2V18 M1090.5 6q3.85714 11.2 8.35714 4.8 M1111.71 2V18 M1103.36 6q3.85714 11.2 8.35714 4.8 M1124.57 2V18 M1116.21 6q3.85714 11.2 8.35714 4.8 M1137.43 2V18 M1128.43 10.8h9" fill="none" stroke="#fff" stroke-width="7.2" stroke-linecap="round" opacity=".9"/>
<path d="M1050 2H1140 M1060.29 2V18 M1051.93 7.6q-0.642857 9.6 7.71429 8.8 M1073.14 2V18 M1064.79 6q3.85714 11.2 8.35714 4.8 M1086 2V18 M1077.64 7.6q-0.642857 9.6 7.71429 8.8 M1098.86 2V18 M1090.5 6q3.85714 11.2 8.35714 4.8 M1111.71 2V18 M1103.36 6q3.85714 11.2 8.35714 4.8 M1124.57 2V18 M1116.21 6q3.85714 11.2 8.35714 4.8 M1137.43 2V18 M1128.43 10.8h9" fill="none" stroke="#5d5038" stroke-width="3.2" stroke-linecap="round"/>
<path d="M620 -8H745 M629.091 -8V6 M621.705 -4.5q3.40909 9.8 7.38636 4.2 M640.455 -8V6 M633.068 -4.5q3.40909 9.8 7.38636 4.2 M651.818 -8V6 M644.432 -4.5q3.40909 9.8 7.38636 4.2 M663.182 -8V6 M655.227 -0.3h7.95455 M674.545 -8V6 M667.159 -4.5q3.40909 9.8 7.38636 4.2 M685.909 -8V6 M678.523 -3.1q-0.568182 8.4 6.81818 7.7 M697.273 -8V6 M689.886 -3.1q-0.568182 8.4 6.81818 7.7 M708.636 -8V6 M700.682 -0.3h7.95455 M720 -8V6 M712.045 -0.3h7.95455 M731.364 -8V6 M723.409 -0.3h7.95455 M742.727 -8V6 M735.341 -4.5q3.40909 9.8 7.38636 4.2" fill="none" stroke="#fff" stroke-width="7.2" stroke-linecap="round" opacity=".9"/>
<path d="M620 -8H745 M629.091 -8V6 M621.705 -4.5q3.40909 9.8 7.38636 4.2 M640.455 -8V6 M633.068 -4.5q3.40909 9.8 7.38636 4.2 M651.818 -8V6 M644.432 -4.5q3.40909 9.8 7.38636 4.2 M663.182 -8V6 M655.227 -0.3h7.95455 M674.545 -8V6 M667.159 -4.5q3.40909 9.8 7.38636 4.2 M685.909 -8V6 M678.523 -3.1q-0.568182 8.4 6.81818 7.7 M697.273 -8V6 M689.886 -3.1q-0.568182 8.4 6.81818 7.7 M708.636 -8V6 M700.682 -0.3h7.95455 M720 -8V6 M712.045 -0.3h7.95455 M731.364 -8V6 M723.409 -0.3h7.95455 M742.727 -8V6 M735.341 -4.5q3.40909 9.8 7.38636 4.2" fill="none" stroke="#5d5038" stroke-width="3.2" stroke-linecap="round"/>
<path d="M767 340 C762 310 740 300 740 272 A27 27 0 0 1 794 272 C794 300 772 310 767 340Z" fill="#ea4335" stroke="#b3261e" stroke-width="1.5"/>
<circle cx="767" cy="270" r="9" fill="#5c0f0b"/>
<rect x="25" y="27" width="237" height="71" rx="4" fill="#fff" style="filter:drop-shadow(0 1px 2px rgba(0,0,0,.3))"/>
<line x1="121" y1="27" x2="121" y2="98" stroke="#e6e6e6" stroke-width="2"/>
<text x="73" y="71" font-size="26" fill="#000" font-weight="bold" font-style="normal" text-anchor="middle" letter-spacing="0">Map</text>
<text x="192" y="71" font-size="27" fill="#565656" font-weight="normal" font-style="normal" text-anchor="middle" letter-spacing="0">Satellite</text>
<rect x="1343" y="27" width="62" height="61" rx="4" fill="#fff" style="filter:drop-shadow(0 1px 2px rgba(0,0,0,.3))"/>
<path d="M1355 50v-11h11 M1382 39h11v11 M1393 65v11h-11 M1366 76h-11v-11" fill="none" stroke="#666" stroke-width="5"/>
<rect x="1343" y="465" width="70" height="72" rx="4" fill="#fff" style="filter:drop-shadow(0 1px 2px rgba(0,0,0,.3))"/>
<circle cx="1378" cy="483" r="10" fill="#fbbc05" stroke="#e8a000" stroke-width="1.5"/>
<path d="M1366 495h24l5 20h-6l-3-8v20h-6v-12h-4v12h-6v-20l-3 8h-6z" fill="#fbbc05" stroke="#e8a000" stroke-width="1.5"/>
<rect x="1343" y="565" width="70" height="138" rx="4" fill="#fff" style="filter:drop-shadow(0 1px 2px rgba(0,0,0,.3))"/>
<line x1="1355" y1="634" x2="1401" y2="634" stroke="#e6e6e6" stroke-width="2"/>
<path d="M1378 585v26 M1365 598h26" stroke="#666" stroke-width="7"/>
<path d="M1365 669h26" stroke="#666" stroke-width="7"/>
<text x="16" y="745" font-size="50" font-weight="bold" font-family="Liberation Sans, sans-serif" stroke="#fff" stroke-width="4" paint-order="stroke" letter-spacing="-2.5"><tspan fill="#4285f4">G</tspan><tspan fill="#ea4335">o</tspan><tspan fill="#fbbc05">o</tspan><tspan fill="#4285f4">g</tspan><tspan fill="#34a853">l</tspan><tspan fill="#ea4335">e</tspan></text>
<rect x="715" y="725" width="725" height="40" fill="#f5f5f5" opacity=".8"/>
<line x1="1015" y1="730" x2="1015" y2="765" stroke="#ddd" stroke-width="2"/><line x1="1197" y1="730" x2="1197" y2="765" stroke="#ddd" stroke-width="2"/>
<text x="725" y="756" font-size="25.5" fill="#444" font-weight="normal" font-style="normal" text-anchor="start" letter-spacing="0">Map data &#169;2017 Google</text>
<text x="1030" y="756" font-size="25.5" fill="#444" font-weight="normal" font-style="normal" text-anchor="start" letter-spacing="0">Terms of Use</text>
<text x="1212" y="756" font-size="25.5" fill="#444" font-weight="normal" font-style="normal" text-anchor="start" letter-spacing="0">Report a map error</text>
</svg></div>

<div class="lbl" style="left:735px;top:738px">Website</div>
<div class="ul" style="left:735px;top:790px;width:605px"></div>

<div class="abs" style="left:0;top:777px;width:33px;height:27px;background:#efefef;border:1px solid #dcdcdc;border-left:0;border-bottom:0"></div>
<svg class="ico" style="left:5px;top:781px" width="20" height="20" viewBox="0 0 20 20">
  <rect x="0" y="0" width="20" height="20" fill="#f4390e"/>
  <path d="M0 5L6 20 M0 13.5L20 8.5 M8 20L20 17 M14 0L15 4L20 3" fill="none" stroke="#fff" stroke-width="1"/>
</svg>
</body></html>
